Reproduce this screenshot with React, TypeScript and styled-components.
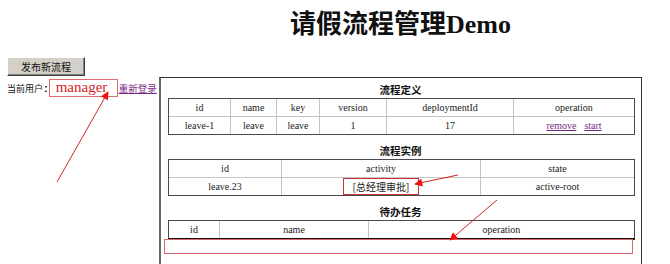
import React from 'react'
import styled, { createGlobalStyle } from 'styled-components'

const GlobalStyle = createGlobalStyle`
  html, body {
    margin: 0;
    padding: 0;
    background: #fff;
    font-family: 'Liberation Serif', 'Noto Sans CJK SC', serif;
    color: #111;
  }
`

const Page = styled.div`
  position: relative;
  width: 670px;
  height: 264px;
  overflow: hidden;
  padding-left: 7px;
  box-sizing: border-box;
`

const Header = styled.div`
  height: 57px;
  margin-left: 152px;
  width: 483px;
  box-sizing: border-box;
  padding-top: 10px;
`

const Title = styled.h1`
  margin: 0;
  text-align: center;
  font-family: 'Liberation Serif', 'Noto Sans CJK SC', serif;
  font-size: 26px;
  line-height: 30px;
  font-weight: bold;
  color: #111;
`

const PublishButton = styled.button`
  display: block;
  width: 78px;
  height: 19px;
  padding: 0;
  background: #d4d0c8;
  border: 1px solid;
  border-color: #fff #404040 #404040 #fff;
  box-shadow: inset -1px -1px #808080;
  font-family: 'Noto Sans CJK SC', sans-serif;
  font-size: 10px;
  color: #111;
`

const Main = styled.div`
  display: flex;
  align-items: flex-start;
  margin-top: 1px;
`

const UserInfo = styled.div`
  width: 152px;
  flex-shrink: 0;
  display: flex;
  align-items: center;
  padding-top: 2px;
  white-space: nowrap;
  font-family: 'Noto Sans CJK SC', sans-serif;
  font-size: 9px;
`

const Label = styled.span`
  display: inline-flex;
  align-items: center;
`

const Colon = styled.b`
  font-family: 'Liberation Sans', sans-serif;
  font-size: 11px;
  margin: 0 1px 0 1px;
`

const UserName = styled.span`
  display: inline-block;
  box-sizing: border-box;
  width: 69px;
  height: 18px;
  padding-left: 6px;
  border: 1px solid #e06a6a;
  color: #d41c1c;
  font-family: 'Liberation Serif', serif;
  font-size: 15px;
  line-height: 15px;
`

const Link = styled.a<{ $gap?: number }>`
  color: #7a2a86;
  text-decoration: underline;
  cursor: pointer;
  margin-left: ${(p) => p.$gap ?? 0}px;
`

const ReloginLink = styled(Link)`
  font-size: 9.5px;
`

const Panel = styled.div`
  width: 483px;
  height: 200px;
  flex-shrink: 0;
  box-sizing: border-box;
  border: 1px solid #333;
  border-left: 2px solid #6a6a6a;
  border-bottom: none;
  padding: 0 8px 0 7px;
`

const SectionTitle = styled.div<{ $first?: boolean }>`
  margin-top: ${(p) => (p.$first ? 3 : 7)}px;
  height: 17px;
  line-height: 17px;
  text-align: center;
  font-family: 'Noto Sans CJK SC', sans-serif;
  font-size: 10.5px;
  font-weight: bold;
  color: #111;
`

const Table = styled.table<{ $closed?: boolean }>`
  width: 465px;
  table-layout: fixed;
  border-collapse: separate;
  border-spacing: 0;
  border: 1px solid #4a4a4a;
  border-bottom: ${(p) => (p.$closed ? '2px solid #111' : '1px solid #4a4a4a')};

  td {
    height: 17px;
    padding: 0;
    text-align: center;
    font-size: 10px;
    line-height: 17px;
    color: #222;
    border-right: 1px solid #c4c4c4;
    border-bottom: 1px solid #c4c4c4;
    white-space: nowrap;
  }
  td:last-child {
    border-right: none;
  }
  tr:last-child td {
    border-bottom: none;
  }
`

const Col = styled.col<{ $w: number }>`
  width: ${(p) => p.$w}px;
`

const ActivityBox = styled.span`
  display: inline-block;
  box-sizing: border-box;
  height: 17px;
  padding: 0 9px;
  border: 1px solid #c83434;
  font-family: 'Noto Sans CJK SC', sans-serif;
  font-size: 10px;
  line-height: 15px;
  vertical-align: top;
`

const EmptyTaskRow = styled.div`
  box-sizing: border-box;
  width: 469px;
  height: 15px;
  margin-left: -4px;
  margin-top: -1px;
  border: 1px solid #d86a6a;
`

const Annotations = styled.svg`
  position: absolute;
  left: 0;
  top: 0;
  pointer-events: none;
`

type Section = {
  title: string
  widths: number[]
  head: string[]
}

const definitionSection: Section = {
  title: '流程定义',
  widths: [62, 46, 43, 67, 127, 120],
  head: ['id', 'name', 'key', 'version', 'deploymentId', 'operation'],
}

const instanceSection: Section = {
  title: '流程实例',
  widths: [113, 199, 153],
  head: ['id', 'activity', 'state'],
}

const taskSection: Section = {
  title: '待办任务',
  widths: [51, 149, 265],
  head: ['id', 'name', 'operation'],
}

const Cols = ({ widths }: { widths: number[] }) => (
  <colgroup>
    {widths.map((w, i) => (
      <Col key={i} $w={w} />
    ))}
  </colgroup>
)

const HeadRow = ({ head }: { head: string[] }) => (
  <tr>
    {head.map((h) => (
      <td key={h}>{h}</td>
    ))}
  </tr>
)

const App = () => (
  <>
    <GlobalStyle />
    <Page>
      <Header>
        <Title>请假流程管理Demo</Title>
      </Header>
      <PublishButton>发布新流程</PublishButton>
      <Main>
        <UserInfo>
          <Label>
            当前用户<Colon>:</Colon>
          </Label>
          <UserName>manager</UserName>
          <ReloginLink $gap={1}>重新登录</ReloginLink>
        </UserInfo>
        <Panel>
          <SectionTitle $first>{definitionSection.title}</SectionTitle>
          <Table>
            <Cols widths={definitionSection.widths} />
            <tbody>
              <HeadRow head={definitionSection.head} />
              <tr>
                <td>leave-1</td>
                <td>leave</td>
                <td>leave</td>
                <td>1</td>
                <td>17</td>
                <td>
                  <Link>remove</Link>
                  <Link $gap={8}>start</Link>
                </td>
              </tr>
            </tbody>
          </Table>

          <SectionTitle>{instanceSection.title}</SectionTitle>
          <Table>
            <Cols widths={instanceSection.widths} />
            <tbody>
              <HeadRow head={instanceSection.head} />
              <tr>
                <td>leave.23</td>
                <td>
                  <ActivityBox>[总经理审批]</ActivityBox>
                </td>
                <td>active-root</td>
              </tr>
            </tbody>
          </Table>

          <SectionTitle>{taskSection.title}</SectionTitle>
          <Table $closed>
            <Cols widths={taskSection.widths} />
            <tbody>
              <HeadRow head={taskSection.head} />
            </tbody>
          </Table>
          <EmptyTaskRow />
        </Panel>
      </Main>

      {/* red callout arrows drawn over the page */}
      <Annotations width={670} height={264} viewBox="0 0 670 264">
        <defs>
          <marker
            id="head"
            viewBox="0 0 10 10"
            refX="9"
            refY="5"
            markerWidth="10"
            markerHeight="8"
            markerUnits="userSpaceOnUse"
            orient="auto"
          >
            <path d="M0 0 L10 5 L0 10 Z" fill="#f01010" />
          </marker>
        </defs>
        <g stroke="#d42424" strokeWidth={1} fill="none">
          <line x1={57} y1={182} x2={108} y2={92} markerEnd="url(#head)" />
          <line x1={458} y1={175} x2={415} y2={184} markerEnd="url(#head)" />
          <line x1={497} y1={200} x2={450} y2={240} markerEnd="url(#head)" />
        </g>
      </Annotations>
    </Page>
  </>
)

export default App
